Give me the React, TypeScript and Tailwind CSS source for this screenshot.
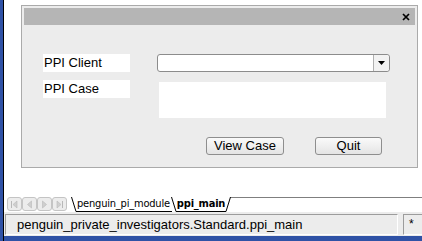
import React from 'react';

const NavButton: React.FC<{ kind: 'first' | 'prev' | 'next' | 'last' }> = ({ kind }) => (
  <div className="w-[15px] h-[14px] border border-[#c4c4c4] rounded-[3px] bg-[#ececec] flex items-center justify-center">
    <svg width="9" height="9" viewBox="0 0 9 9">
      {kind === 'first' && (
        <>
          <rect x="1" y="1" width="1" height="7" fill="#b8b8b8" />
          <path d="M7 1 L3 4.5 L7 8 Z" fill="#cfcfcf" stroke="#b8b8b8" strokeWidth="0.6" />
        </>
      )}
      {kind === 'prev' && <path d="M6.5 1 L2.5 4.5 L6.5 8 Z" fill="#cfcfcf" stroke="#b8b8b8" strokeWidth="0.6" />}
      {kind === 'next' && <path d="M2.5 1 L6.5 4.5 L2.5 8 Z" fill="#cfcfcf" stroke="#b8b8b8" strokeWidth="0.6" />}
      {kind === 'last' && (
        <>
          <path d="M2 1 L6 4.5 L2 8 Z" fill="#cfcfcf" stroke="#b8b8b8" strokeWidth="0.6" />
          <rect x="7" y="1" width="1" height="7" fill="#b8b8b8" />
        </>
      )}
    </svg>
  </div>
);

export default function App() {
  return (
    <div
      className="w-[422px] h-[241px] flex bg-white overflow-hidden text-black"
      style={{ fontFamily: '"Liberation Sans", Arial, sans-serif' }}
    >
      <div className="w-[3px] bg-[#2f52a6]" />
      <div className="w-[1px] bg-black" />

      <div className="flex-1 flex flex-col">
        {/* workspace */}
        <div className="h-[193px] pl-[17px] pt-[5px]">
          <div className="w-[397px] h-[163px] border border-[#aaaaaa] bg-[#ececec] p-[2px]">
            <div className="h-[17px] bg-[#b5b5b5] flex items-center justify-end pr-[5px]">
              <svg width="8" height="8" viewBox="0 0 8 8">
                <path d="M1 1 L7 7 M7 1 L1 7" stroke="#000" strokeWidth="1.7" />
              </svg>
            </div>

            <div className="pl-[19px]">
              <div className="mt-[29px] flex">
                <div className="w-[87px] h-[18px] bg-white text-[13px] leading-[18px] pl-[1px]">PPI Client</div>
                <div className="ml-[27px] w-[233px] h-[18px] bg-white border border-[#8c8c8c] rounded-[3px] flex justify-end">
                  <div className="w-[16px] h-full border-l border-[#b0b0b0] bg-[#f2f2f2] rounded-r-[3px] flex items-center justify-center">
                    <svg width="7" height="4" viewBox="0 0 7 4">
                      <path d="M0 0 L7 0 L3.5 4 Z" fill="#000" />
                    </svg>
                  </div>
                </div>
              </div>

              <div className="mt-[8px] flex">
                <div className="w-[87px] h-[18px] bg-white text-[13px] leading-[18px] pl-[1px]">PPI Case</div>
                <div className="ml-[29px] mt-[2px] w-[227px] h-[36px] bg-white" />
              </div>

              <div className="mt-[19px] flex pl-[163px] gap-[31px]">
                <button className="w-[78px] h-[18px] border border-[#8e8e8e] rounded-[3px] bg-gradient-to-b from-[#fafafa] to-[#e4e4e4] text-[13px] leading-[16px]">
                  View Case
                </button>
                <button className="w-[67px] h-[18px] border border-[#8e8e8e] rounded-[3px] bg-gradient-to-b from-[#fafafa] to-[#e4e4e4] text-[13px] leading-[16px]">
                  Quit
                </button>
              </div>
            </div>
          </div>
        </div>

        {/* sheet tabs */}
        <div className="h-[19px] flex items-start pt-[4px]">
          <div className="flex ml-[3px]">
            <NavButton kind="first" />
            <NavButton kind="prev" />
            <NavButton kind="next" />
            <NavButton kind="last" />
          </div>
          <div
            className="relative flex-1 h-[15px] flex text-[11px] leading-[14px]"
            style={{ fontFamily: '"DejaVu Sans Condensed", "DejaVu Sans", sans-serif' }}
          >
            <svg className="absolute left-0 top-0" width="360" height="15" viewBox="0 0 360 15">
              <path
                d="M4.5 0 L9 14.5 L105 14.5 M104.5 0 L109 14.5 L159 14.5 L163.5 0 L360 0"
                stroke="#000"
                strokeWidth="1"
                fill="none"
              />
            </svg>
            <span className="ml-[10px] tracking-[-0.2px]">penguin_pi_module</span>
            <span className="ml-[7px] font-bold tracking-[-0.2px]">ppi_main</span>
          </div>
        </div>

        {/* status bar */}
        <div className="h-[24px] bg-[#ececec] flex pt-[2px] pb-[1px]">
          <div className="ml-[1px] w-[393px] h-[21px] border border-[#9c9c9c] border-r-[#ffffff] border-b-[#ffffff] bg-[#ececec] text-[13px] leading-[19px] pl-[11px]">
            penguin_private_investigators.Standard.ppi_main
          </div>
          <div className="ml-[5px] flex-1 h-[21px] border border-[#9c9c9c] border-r-0 border-b-[#ffffff] text-[12px] leading-[19px] pl-[5px]">
            *
          </div>
        </div>
        <div className="h-[5px] bg-[#2f52a6]" />
      </div>
    </div>
  );
}
